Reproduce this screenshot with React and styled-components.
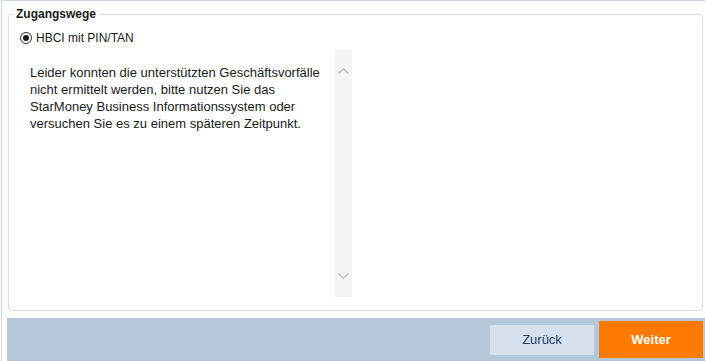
import React from 'react';
import styled, { createGlobalStyle } from 'styled-components';

const GlobalStyle = createGlobalStyle`
    html, body {
        margin: 0;
        padding: 0;
        background: #ffffff;
        font-family: "Liberation Sans", Arial, sans-serif;
        overflow: hidden;
    }
`;

const Frame = styled.div`
    height: 361px;
    box-sizing: border-box;
    margin-left: 1px;
    border-top: 1px solid #c9d5e1;
    border-left: 1px solid #c9d5e1;
    padding-top: 6px;
    display: flex;
    flex-direction: column;
`;

const Group = styled.fieldset`
    flex: 1;
    margin: 0 0 7px 6px;
    width: 695px;
    box-sizing: border-box;
    border: 1px solid #d6dee6;
    border-radius: 3px;
    padding: 0 11px;
    min-width: 0;
`;

const Legend = styled.legend`
    margin-left: -7px;
    padding: 0 3px;
    font-size: 12px;
    line-height: 14px;
    font-weight: bold;
    color: #1a1a1a;
`;

const RadioRow = styled.label`
    display: flex;
    align-items: center;
    gap: 4px;
    height: 16px;
    margin-top: 9px;
    font-size: 12px;
    color: #1a1a1a;
`;

const RadioDot = styled.span`
    width: 12px;
    height: 12px;
    box-sizing: border-box;
    border: 1px solid #333;
    border-radius: 50%;
    display: flex;
    align-items: center;
    justify-content: center;
    background: #fff;

    &::after {
        content: '';
        width: 6px;
        height: 6px;
        border-radius: 50%;
        background: #1a1a1a;
    }
`;

const MessageBox = styled.div`
    margin-top: 3px;
    width: 332px;
    height: 248px;
    display: flex;
`;

const MessageText = styled.p`
    flex: 1;
    margin: 0;
    padding: 15px 10px 0 10px;
    font-size: 13px;
    line-height: 17px;
    color: #1a1a1a;
`;

const ScrollTrack = styled.div`
    width: 17px;
    background: #f4f4f4;
    display: flex;
    flex-direction: column;
    justify-content: space-between;
    align-items: center;
    padding: 19px 0 18px;
    box-sizing: border-box;
`;

const ActionBar = styled.div`
    height: 43px;
    margin-left: 5px;
    background: #b7c7da;
    display: flex;
    align-items: center;
    justify-content: flex-end;
    gap: 5px;
    padding-right: 2px;
`;

const Button = styled.button`
    width: 104px;
    height: ${p => (p.primary ? '37px' : '30px')};
    border: none;
    border-radius: 0;
    font-family: "Liberation Sans", Arial, sans-serif;
    font-size: 13px;
    font-weight: ${p => (p.primary ? 'bold' : 'normal')};
    color: ${p => (p.primary ? '#ffffff' : '#223f6b')};
    background: ${p => (p.primary ? '#ff7a00' : '#d7e1ed')};
    padding: 0;
    cursor: pointer;
`;

const Chevron = ({ down }) => (
    <svg width="11" height="6" viewBox="0 0 11 6">
        <path
            d={down ? 'M0.5 0.5 L5.5 5 L10.5 0.5' : 'M0.5 5.5 L5.5 1 L10.5 5.5'}
            fill="none"
            stroke="#c6c6c6"
            strokeWidth="1.6"
        />
    </svg>
);

export default function App() {
    return (
        <>
            <GlobalStyle />
            <Frame>
                <Group>
                    <Legend>Zugangswege</Legend>
                    <RadioRow>
                        <RadioDot />
                        HBCI mit PIN/TAN
                    </RadioRow>
                    <MessageBox>
                        <MessageText>
                            Leider konnten die unterstützten Geschäftsvorfälle nicht ermittelt werden, bitte nutzen Sie das StarMoney Business Informationssystem oder versuchen Sie es zu einem späteren Zeitpunkt.
                        </MessageText>
                        <ScrollTrack>
                            <Chevron />
                            <Chevron down />
                        </ScrollTrack>
                    </MessageBox>
                </Group>
                <ActionBar>
                    <Button>Zurück</Button>
                    <Button primary>Weiter</Button>
                </ActionBar>
            </Frame>
        </>
    );
}
